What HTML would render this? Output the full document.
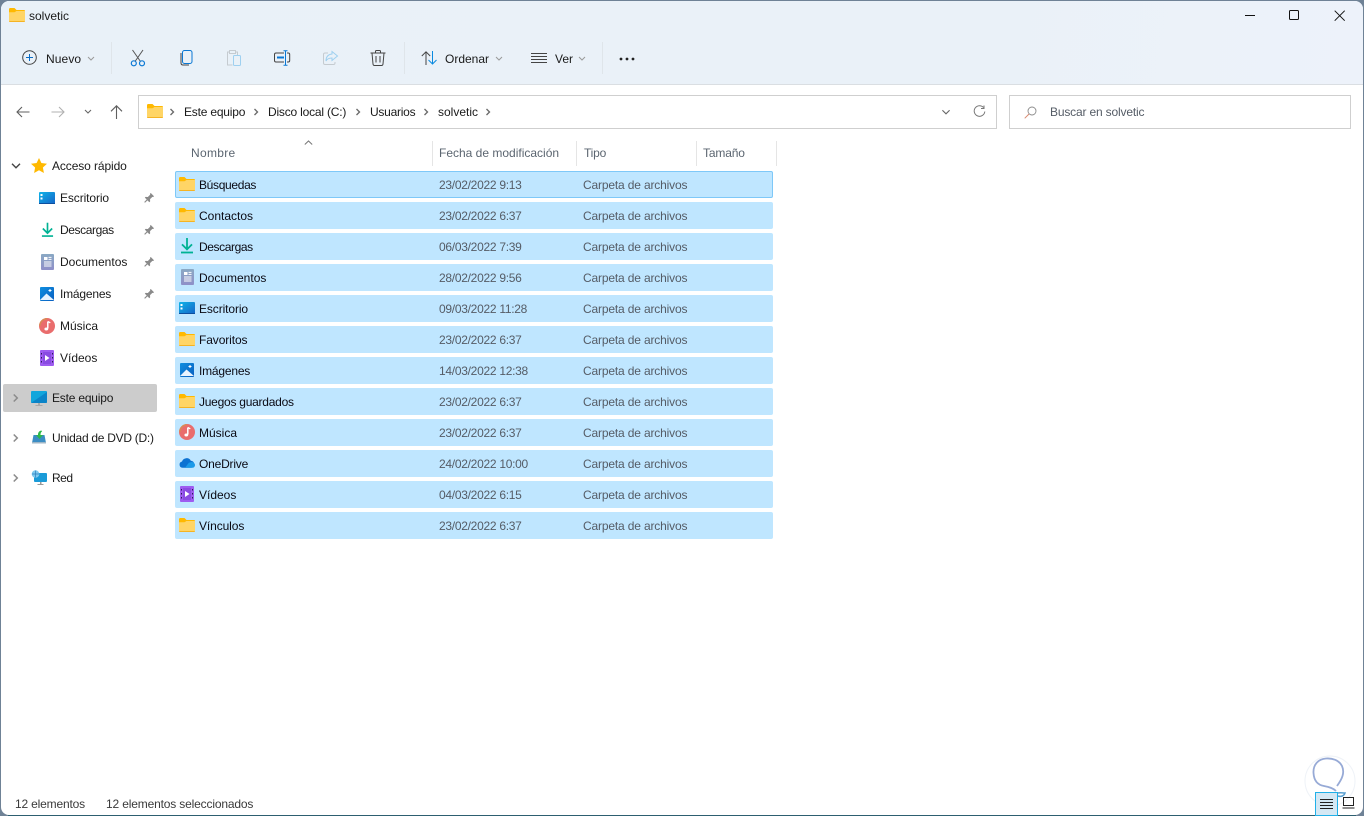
<!DOCTYPE html>
<html lang="es">
<head>
<meta charset="utf-8">
<title>solvetic</title>
<style>
html,body{margin:0;padding:0;width:1364px;height:816px;overflow:hidden;background:#6f8296}
body{font-family:"Liberation Sans",sans-serif;font-size:12px;color:#1a1a1a;position:relative}
#win{position:absolute;left:1px;top:1px;width:1362px;height:814px;background:#fff;border-radius:8px;overflow:hidden}
#head{position:absolute;left:0;top:0;width:1362px;height:83px;background:linear-gradient(100deg,#e9f1f8 0%,#eaf1f8 70%,#edf2fa 100%);border-bottom:1px solid #dadee2}
.t{position:absolute;white-space:nowrap;line-height:16px}
.i{position:absolute;overflow:visible}
.sep{position:absolute;width:1px;background:#dfe5ea}
.row{position:absolute;left:175px;width:598px;height:27px;background:#bfe6ff;border-radius:2px}
.nm{color:#0a0a14;left:199px}
.dt{color:#555c66;left:439px;letter-spacing:-.28px}
.ty{color:#555c66;left:583px;letter-spacing:-.16px}
.hd{color:#5b6570}
.hs{position:absolute;top:141px;width:1px;height:25px;background:#e5e5e5}
.cb{color:#6a6a6a}
.cn{color:#8c8c8c}
</style>
</head>
<body>
<svg width="0" height="0" style="position:absolute">
<defs>
<symbol id="folder" viewBox="0 0 16 14"><path d="M0 1.200C0 .5.500 0 1.200 0h4.300l2 2H15c.6 0 1 .4 1 1v1.500H0z" fill="#ffb900"/><path d="M0 4.300h5.500L7.500 3H16v10c0 .6-.4 1-1 1H1c-.6 0-1-.4-1-1z" fill="#ffd566"/><path d="M0 13h16c0 .6-.4 1-1 1H1c-.6 0-1-.4-1-1z" fill="#f5b324"/></symbol>
<symbol id="dl" viewBox="0 0 14 16"><path d="M7 0v11M2 6.400L7 11.400l5-5" fill="none" stroke="#00b294" stroke-width="1.800"/><path d="M1 14.500h12" stroke="#00b294" stroke-width="1.800"/></symbol>
<symbol id="doc" viewBox="0 0 13 16"><defs><linearGradient id="dg" x1="0" y1="0" x2="0" y2="1"><stop offset="0" stop-color="#8aa9c4"/><stop offset="1" stop-color="#8f8fc8"/></linearGradient></defs><rect width="13" height="16" rx="1" fill="url(#dg)"/><path d="M3 3h3.500v3H3z" fill="#fff"/><path d="M7.500 3.400H10.500M7.500 5.400h3M3 8h7.500M3 10h7.500M3 12h7.500" stroke="#fff" stroke-width="1"/></symbol>
<symbol id="desk" viewBox="0 0 16 12"><defs><linearGradient id="de" x1="0" y1="0" x2="1" y2="1"><stop offset="0" stop-color="#10b4e8"/><stop offset="1" stop-color="#1565c8"/></linearGradient></defs><rect width="16" height="12" rx="1" fill="url(#de)"/><path d="M1.500 2h2v2h-2zM1.500 5.500h2v2h-2z" fill="#fff"/><path d="M0 11h16v1H0z" fill="#0d4f9e"/></symbol>
<symbol id="img" viewBox="0 0 14 14"><defs><linearGradient id="im" x1="0" y1="0" x2="1" y2="1"><stop offset="0" stop-color="#0f8fe0"/><stop offset="1" stop-color="#0a5fc0"/></linearGradient></defs><rect width="14" height="14" rx="1" fill="url(#im)"/><path d="M0 13L6.500 6.500 14 13z" fill="#e8f4ff"/><path d="M10 2v3M8.500 3.500h3" stroke="#fff" stroke-width="1"/></symbol>
<symbol id="mus" viewBox="0 0 16 16"><circle cx="8" cy="8" r="8" fill="#e96d6d"/><path d="M.8 8a7.200 7.200 0 0 1 7.200-7.200" fill="none" stroke="#d98a55" stroke-width="1.500"/><path d="M8.800 3.500v7" stroke="#fff" stroke-width="1.500"/><path d="M8.800 3.500l2.500 1.300" stroke="#fff" stroke-width="1.300"/><ellipse cx="7.300" cy="11" rx="1.900" ry="1.500" fill="#fff"/></symbol>
<symbol id="vid" viewBox="0 0 14 16"><rect width="14" height="16" rx="1" fill="#9e5cf0"/><rect x="3" y="2" width="8" height="12" fill="#8a4be2"/><path d="M5 5l4.500 3L5 11z" fill="#fff"/><path d="M1 3h1v1.500H1zM1 7h1v1.500H1zM1 11h1v1.500H1zM12 3h1v1.500h-1zM12 7h1v1.500h-1zM12 11h1v1.500h-1z" fill="#2c1a58"/></symbol>
<symbol id="one" viewBox="0 0 16 11"><path d="M3.500 10.800A3.200 3.200 0 0 1 3 4.500 4.800 4.800 0 0 1 11.800 3.700 3.600 3.600 0 0 1 12.500 10.800z" fill="#0c72d2"/><path d="M6 10.800l3.800-5 3-.8c1.800.2 3.200 1.600 3.200 3.100 0 1.500-1.200 2.700-2.700 2.700z" fill="#1c9ae8"/></symbol>
<symbol id="pin" viewBox="0 0 12 12"><path transform="rotate(45 6 6)" d="M3.500 0h5v1.200l-.8.5v3.600L9.500 7v1.200H6.600V12H5.400V8.200H2.500V7l1.800-1.700V1.700l-.8-.5z" fill="#8a8a8a"/></symbol>
<symbol id="chr" viewBox="0 0 8 10"><path d="M2 1l4 4-4 4" fill="none" stroke="currentColor" stroke-width="1.800"/></symbol>
<symbol id="chd" viewBox="0 0 8 5"><path d="M1 1l3 3 3-3" fill="none" stroke="#9a9a9a" stroke-width="1"/></symbol>
</defs>
</svg>

<div style="position:absolute;left:8px;top:815px;width:1348px;height:1px;background:#2d5f70"></div>
<div id="win">
<div id="head"></div>
</div>

<!-- title bar -->
<svg class="i" style="left:9px;top:8px" width="16" height="14"><use href="#folder"/></svg>
<div class="t" style="left:29px;top:8px">solvetic</div>
<svg class="i" style="left:1244px;top:10px" width="12" height="12"><path d="M1 5.500h10" stroke="#111" stroke-width="1"/></svg>
<svg class="i" style="left:1289px;top:10px" width="11" height="11"><rect x=".5" y=".5" width="9" height="9" rx="1" fill="none" stroke="#111"/></svg>
<svg class="i" style="left:1334px;top:10px" width="12" height="12"><path d="M.7.700l10 10M10.700.700l-10 10" stroke="#111" stroke-width="1"/></svg>

<!-- toolbar -->
<svg class="i" style="left:22px;top:50px" width="16" height="16"><circle cx="7.500" cy="7.500" r="6.800" fill="none" stroke="#444" stroke-width="1"/><path d="M7.500 4v7M4 7.500h7" stroke="#0a6cc4" stroke-width="1"/></svg>
<div class="t" style="left:46px;top:51px;letter-spacing:.1px">Nuevo</div>
<svg class="i" style="left:87px;top:56px" width="8" height="5"><use href="#chd"/></svg>
<div class="sep" style="left:111px;top:42px;height:32px"></div>
<svg class="i" style="left:130px;top:49px" width="16" height="18"><path d="M2.500 1l8 11.500M13 1L5 12.500" stroke="#555" stroke-width="1" fill="none"/><circle cx="3.800" cy="14.300" r="2.500" fill="none" stroke="#0a78d4" stroke-width="1.200"/><circle cx="12" cy="14.300" r="2.500" fill="none" stroke="#0a78d4" stroke-width="1.200"/></svg>
<svg class="i" style="left:180px;top:50px" width="14" height="16"><path d="M1 3v10c0 1.300.7 2 2 2h6" fill="none" stroke="#444" stroke-width="1"/><rect x="2.500" y=".5" width="9.500" height="13" rx="2" fill="none" stroke="#0a78d4" stroke-width="1"/></svg>
<svg class="i" style="left:226px;top:50px" width="16" height="17"><path d="M3.500 2H1.500v13h5" fill="none" stroke="#c5cbd0"/><rect x="3.500" y=".5" width="6" height="3" fill="none" stroke="#c5cbd0"/><path d="M9.500 2h2v3" fill="none" stroke="#c5cbd0"/><rect x="7.500" y="5.500" width="7" height="10" rx="1" fill="none" stroke="#9ed0f0"/></svg>
<svg class="i" style="left:274px;top:50px" width="17" height="16"><path d="M10 3H2c-1 0-1.500.5-1.500 1.500v6c0 1 .5 1.500 1.500 1.500h8M13 3h1.200c1 0 1.500.5 1.500 1.500v6c0 1-.5 1.500-1.500 1.500H13" fill="none" stroke="#444"/><path d="M3 7.500h7" stroke="#0a78d4" stroke-width="2"/><path d="M11.500 1v14M9.500.700h4M9.500 15.300h4" stroke="#0a78d4" stroke-width="1"/></svg>
<svg class="i" style="left:323px;top:50px" width="16" height="15"><path d="M9 1.500l5.500 4.500L9 10.500V8C6 8 4 9 3 11c0-4 2-6.500 6-7z" fill="none" stroke="#9ed0f0"/><path d="M5 3H2C1 3 .500 3.500 .500 4.500V13c0 1 .5 1.500 1.500 1.500h8.500c1 0 1.500-.5 1.500-1.500v-1" fill="none" stroke="#c5cbd0"/></svg>
<svg class="i" style="left:370px;top:50px" width="16" height="16"><path d="M.5 3h15M5.500 3V1.500c0-.5.3-1 1-1h3c.7 0 1 .5 1 1V3M2 3l1 11c.1 1 .7 1.500 1.500 1.500h7c.8 0 1.400-.5 1.500-1.500l1-11M6 6v6.500M10 6v6.500" fill="none" stroke="#444"/></svg>
<div class="sep" style="left:404px;top:42px;height:32px"></div>
<svg class="i" style="left:421px;top:51px" width="17" height="14"><path d="M5 14V1M.8 5L5 .8 9.200 5" fill="none" stroke="#444"/><path d="M11.500 0v13M7.500 9l4 4 4-4" fill="none" stroke="#0a8ae0"/></svg>
<div class="t" style="left:445px;top:51px">Ordenar</div>
<svg class="i" style="left:495px;top:56px" width="8" height="5"><use href="#chd"/></svg>
<svg class="i" style="left:531px;top:53px" width="16" height="11"><path d="M0 .500h16M0 3.500h16M0 6.500h16M0 9.500h16" stroke="#444"/></svg>
<div class="t" style="left:555px;top:51px">Ver</div>
<svg class="i" style="left:578px;top:56px" width="8" height="5"><use href="#chd"/></svg>
<div class="sep" style="left:602px;top:42px;height:32px"></div>
<svg class="i" style="left:619px;top:57px" width="17" height="4"><circle cx="2" cy="2" r="1.400" fill="#222"/><circle cx="8" cy="2" r="1.400" fill="#222"/><circle cx="14" cy="2" r="1.400" fill="#222"/></svg>

<!-- nav -->
<svg class="i" style="left:16px;top:106px" width="14" height="12"><path d="M13.500 6H1M6 1L1 6l5 5" fill="none" stroke="#5f5f5f" stroke-width="1.100"/></svg>
<svg class="i" style="left:51px;top:106px" width="14" height="12"><path d="M.5 6H13M8 1l5 5-5 5" fill="none" stroke="#b0b0b0" stroke-width="1.100"/></svg>
<svg class="i" style="left:83.500px;top:109px" width="8" height="5"><path d="M1 1l3 3 3-3" fill="none" stroke="#666" stroke-width="1.100"/></svg>
<svg class="i" style="left:110px;top:105px" width="13" height="14"><path d="M6.500 14V1M1 6.300L6.500.8 12 6.300" fill="none" stroke="#5f5f5f" stroke-width="1.100"/></svg>

<div style="position:absolute;left:138px;top:95px;width:857px;height:32px;border:1px solid #cfcfcf;background:#fff"></div>
<svg class="i" style="left:147px;top:104px" width="16" height="14"><use href="#folder"/></svg>
<svg class="i cb" style="left:169px;top:108px" width="6" height="8" viewBox="0 0 8 10"><use href="#chr"/></svg>
<div class="t" style="left:184px;top:104px;letter-spacing:-.2px">Este equipo</div>
<svg class="i cb" style="left:253px;top:108px" width="6" height="8" viewBox="0 0 8 10"><use href="#chr"/></svg>
<div class="t" style="left:268px;top:104px;letter-spacing:-.2px">Disco local (C:)</div>
<svg class="i cb" style="left:355px;top:108px" width="6" height="8" viewBox="0 0 8 10"><use href="#chr"/></svg>
<div class="t" style="left:370px;top:104px;letter-spacing:-.25px">Usuarios</div>
<svg class="i cb" style="left:423px;top:108px" width="6" height="8" viewBox="0 0 8 10"><use href="#chr"/></svg>
<div class="t" style="left:438px;top:104px">solvetic</div>
<svg class="i cb" style="left:485px;top:108px" width="6" height="8" viewBox="0 0 8 10"><use href="#chr"/></svg>
<svg class="i" style="left:941px;top:109px" width="10" height="6" viewBox="0 0 8 5"><path d="M1 1l3 3 3-3" fill="none" stroke="#666" stroke-width=".9"/></svg>
<svg class="i" style="left:973px;top:105px" width="13" height="13"><path d="M10.500 2.500A5.300 5.300 0 1 0 11.800 6.500" fill="none" stroke="#777" stroke-width="1"/><path d="M11 .500v3H8" fill="none" stroke="#777" stroke-width="1"/></svg>

<div style="position:absolute;left:1009px;top:95px;width:340px;height:32px;border:1px solid #cfcfcf;background:#fff"></div>
<svg class="i" style="left:1024px;top:106px" width="13" height="13"><circle cx="8" cy="5" r="4" fill="none" stroke="#8a8a8a" stroke-width=".9"/><path d="M5 8L.7 12.300" stroke="#d98a70" stroke-width="1"/></svg>
<div class="t" style="left:1050px;top:104px;color:#555c66;letter-spacing:-.17px">Buscar en solvetic</div>

<!-- sidebar -->
<div style="position:absolute;left:3px;top:384px;width:154px;height:28px;background:#ccc;border-radius:2px"></div>
<svg class="i" style="left:11px;top:163px" width="10" height="6" viewBox="0 0 10 6"><path d="M1 .8l4 4 4-4" fill="none" stroke="#444" stroke-width="1.400"/></svg>
<svg class="i" style="left:31px;top:158px" width="16" height="15" viewBox="0 0 16 15"><path d="M8 0l2.400 5 5.600.7-4.100 3.800 1 5.500L8 12.300 3.100 15l1-5.500L0 5.700 5.600 5z" fill="#ffb900"/></svg>
<div class="t" style="left:52px;top:158px;letter-spacing:-.1px">Acceso rápido</div>

<svg class="i" style="left:39px;top:192px" width="16" height="12"><use href="#desk"/></svg>
<div class="t" style="left:60px;top:190px;letter-spacing:-.1px">Escritorio</div>
<svg class="i" style="left:143px;top:193px" width="11" height="11" viewBox="0 0 12 12"><use href="#pin"/></svg>
<svg class="i" style="left:41px;top:222px" width="13" height="16" viewBox="0 0 14 16"><use href="#dl"/></svg>
<div class="t" style="left:60px;top:222px;letter-spacing:-.4px">Descargas</div>
<svg class="i" style="left:143px;top:225px" width="11" height="11" viewBox="0 0 12 12"><use href="#pin"/></svg>
<svg class="i" style="left:41px;top:254px" width="13" height="16"><use href="#doc"/></svg>
<div class="t" style="left:60px;top:254px">Documentos</div>
<svg class="i" style="left:143px;top:257px" width="11" height="11" viewBox="0 0 12 12"><use href="#pin"/></svg>
<svg class="i" style="left:40px;top:287px" width="14" height="14"><use href="#img"/></svg>
<div class="t" style="left:60px;top:286px;letter-spacing:-.2px">Imágenes</div>
<svg class="i" style="left:143px;top:289px" width="11" height="11" viewBox="0 0 12 12"><use href="#pin"/></svg>
<svg class="i" style="left:39px;top:318px" width="16" height="16"><use href="#mus"/></svg>
<div class="t" style="left:60px;top:318px">Música</div>
<svg class="i" style="left:40px;top:350px" width="14" height="16"><use href="#vid"/></svg>
<div class="t" style="left:60px;top:350px">Vídeos</div>

<svg class="i cn" style="left:12px;top:393px" width="7" height="10" viewBox="0 0 8 10"><use href="#chr"/></svg>
<svg class="i" style="left:31px;top:391px" width="16" height="16"><rect x="0" y="0" width="16" height="12" rx="1" fill="#12a6dc"/><path d="M0 12L16 1v10c0 .6-.4 1-1 1z" fill="#0b84c8"/><path d="M7 12h2v2H7zM4.500 14h7v1h-7z" fill="#a9a9a9"/></svg>
<div class="t" style="left:52px;top:390px;letter-spacing:-.2px">Este equipo</div>
<svg class="i cn" style="left:12px;top:433px" width="7" height="10" viewBox="0 0 8 10"><use href="#chr"/></svg>
<svg class="i" style="left:32px;top:430px" width="14" height="14"><path d="M1.500 5h11L14 13H0z" fill="#3b8dc4"/><path d="M0 12h14v1.500H0z" fill="#9fb6c6"/><path d="M9.500.500C6.500 1 6 3 6 5H4l3.500 4L11 5H8.500c0-1.500.3-2.700 1.500-3.500z" fill="#2eb84a"/></svg>
<div class="t" style="left:52px;top:430px;letter-spacing:-.28px">Unidad de DVD (D:)</div>
<svg class="i cn" style="left:12px;top:473px" width="7" height="10" viewBox="0 0 8 10"><use href="#chr"/></svg>
<svg class="i" style="left:31px;top:470px" width="16" height="16"><rect x="3" y="3" width="13" height="9" rx="1" fill="#1a9bd8"/><path d="M9 12h1.500v2H9zM6.500 14h6v1h-6z" fill="#9a9a9a"/><circle cx="4.500" cy="4" r="3.800" fill="#7cc8ee"/><path d="M1 4h7M4.500.500v7" stroke="#2f7fbc" stroke-width=".7"/></svg>
<div class="t" style="left:52px;top:470px;letter-spacing:-.5px">Red</div>

<!-- column headers -->
<div class="t hd" style="left:191px;top:145px;letter-spacing:.3px">Nombre</div>
<svg class="i" style="left:304px;top:140px" width="9" height="5"><path d="M.8 4.500l3.700-3.500 3.700 3.500" fill="none" stroke="#777" stroke-width="1"/></svg>
<div class="hs" style="left:432px"></div>
<div class="t hd" style="left:439px;top:145px">Fecha de modificación</div>
<div class="hs" style="left:576px"></div>
<div class="t hd" style="left:584px;top:145px;letter-spacing:-.2px">Tipo</div>
<div class="hs" style="left:696px"></div>
<div class="t hd" style="left:703px;top:145px;letter-spacing:-.15px">Tamaño</div>
<div class="hs" style="left:776px"></div>

<!-- rows -->
<div class="row" style="top:171px;box-sizing:border-box;border:1px solid #7ec8f8"></div>
<svg class="i" style="left:179px;top:177px" width="16" height="14"><use href="#folder"/></svg>
<div class="t nm" style="top:177px;letter-spacing:-.33px">Búsquedas</div><div class="t dt" style="top:177px">23/02/2022 9:13</div><div class="t ty" style="top:177px">Carpeta de archivos</div>

<div class="row" style="top:202px"></div>
<svg class="i" style="left:179px;top:208px" width="16" height="14"><use href="#folder"/></svg>
<div class="t nm" style="top:208px">Contactos</div><div class="t dt" style="top:208px">23/02/2022 6:37</div><div class="t ty" style="top:208px">Carpeta de archivos</div>

<div class="row" style="top:233px"></div>
<svg class="i" style="left:180px;top:238px" width="14" height="16" viewBox="0 0 14 16"><use href="#dl"/></svg>
<div class="t nm" style="top:239px;letter-spacing:-.4px">Descargas</div><div class="t dt" style="top:239px">06/03/2022 7:39</div><div class="t ty" style="top:239px">Carpeta de archivos</div>

<div class="row" style="top:264px"></div>
<svg class="i" style="left:181px;top:269px" width="13" height="16"><use href="#doc"/></svg>
<div class="t nm" style="top:270px">Documentos</div><div class="t dt" style="top:270px">28/02/2022 9:56</div><div class="t ty" style="top:270px">Carpeta de archivos</div>

<div class="row" style="top:295px"></div>
<svg class="i" style="left:179px;top:302px" width="16" height="12"><use href="#desk"/></svg>
<div class="t nm" style="top:301px;letter-spacing:-.1px">Escritorio</div><div class="t dt" style="top:301px">09/03/2022 11:28</div><div class="t ty" style="top:301px">Carpeta de archivos</div>

<div class="row" style="top:326px"></div>
<svg class="i" style="left:179px;top:332px" width="16" height="14"><use href="#folder"/></svg>
<div class="t nm" style="top:332px;letter-spacing:-.1px">Favoritos</div><div class="t dt" style="top:332px">23/02/2022 6:37</div><div class="t ty" style="top:332px">Carpeta de archivos</div>

<div class="row" style="top:357px"></div>
<svg class="i" style="left:180px;top:363px" width="14" height="14"><use href="#img"/></svg>
<div class="t nm" style="top:363px;letter-spacing:-.2px">Imágenes</div><div class="t dt" style="top:363px">14/03/2022 12:38</div><div class="t ty" style="top:363px">Carpeta de archivos</div>

<div class="row" style="top:388px"></div>
<svg class="i" style="left:179px;top:394px" width="16" height="14"><use href="#folder"/></svg>
<div class="t nm" style="top:394px;letter-spacing:-.25px">Juegos guardados</div><div class="t dt" style="top:394px">23/02/2022 6:37</div><div class="t ty" style="top:394px">Carpeta de archivos</div>

<div class="row" style="top:419px"></div>
<svg class="i" style="left:179px;top:424px" width="16" height="16"><use href="#mus"/></svg>
<div class="t nm" style="top:425px">Música</div><div class="t dt" style="top:425px">23/02/2022 6:37</div><div class="t ty" style="top:425px">Carpeta de archivos</div>

<div class="row" style="top:450px"></div>
<svg class="i" style="left:179px;top:457px" width="16" height="11"><use href="#one"/></svg>
<div class="t nm" style="top:456px;letter-spacing:-.2px">OneDrive</div><div class="t dt" style="top:456px">24/02/2022 10:00</div><div class="t ty" style="top:456px">Carpeta de archivos</div>

<div class="row" style="top:481px"></div>
<svg class="i" style="left:180px;top:486px" width="14" height="16"><use href="#vid"/></svg>
<div class="t nm" style="top:487px">Vídeos</div><div class="t dt" style="top:487px">04/03/2022 6:15</div><div class="t ty" style="top:487px">Carpeta de archivos</div>

<div class="row" style="top:512px"></div>
<svg class="i" style="left:179px;top:518px" width="16" height="14"><use href="#folder"/></svg>
<div class="t nm" style="top:518px;letter-spacing:-.1px">Vínculos</div><div class="t dt" style="top:518px">23/02/2022 6:37</div><div class="t ty" style="top:518px">Carpeta de archivos</div>

<!-- status bar -->
<div class="t" style="left:15px;top:796px;color:#3a3a3a;letter-spacing:-.17px">12 elementos</div>
<div class="t" style="left:106px;top:796px;color:#3a3a3a;letter-spacing:-.16px">12 elementos seleccionados</div>

<!-- watermark + view buttons -->
<svg class="i" style="left:1304px;top:755px" width="52" height="52"><circle cx="26" cy="26" r="25" fill="#fff" stroke="#eef2f7" stroke-width="1"/><path d="M33 31C38 24 41 18 38 11 35 5 28 3 22 3.500 14 4 9 10 9.500 18 10 26 14 30 20 31 25 32 29 33 32 36" fill="none" stroke="#97aad6" stroke-width="1.800"/><path d="M31 39c3-2 7-1 10-1-1 3-4 4-7 3" fill="none" stroke="#5a9fd0" stroke-width="1.500"/></svg>
<div style="position:absolute;left:1315px;top:792px;width:21px;height:22px;border:1px solid #21b0e8;background:#d4e8f4"></div>
<svg class="i" style="left:1320px;top:797px" width="13" height="13"><path d="M0 2.500h13M0 5.500h13M0 8.500h13M0 11.500h13" stroke="#222" stroke-width="1"/></svg>
<svg class="i" style="left:1342px;top:797px" width="13" height="12"><rect x="1.500" y=".5" width="10" height="8" fill="none" stroke="#222"/><path d="M.5 11h12" stroke="#222"/></svg>
</body>
</html>
